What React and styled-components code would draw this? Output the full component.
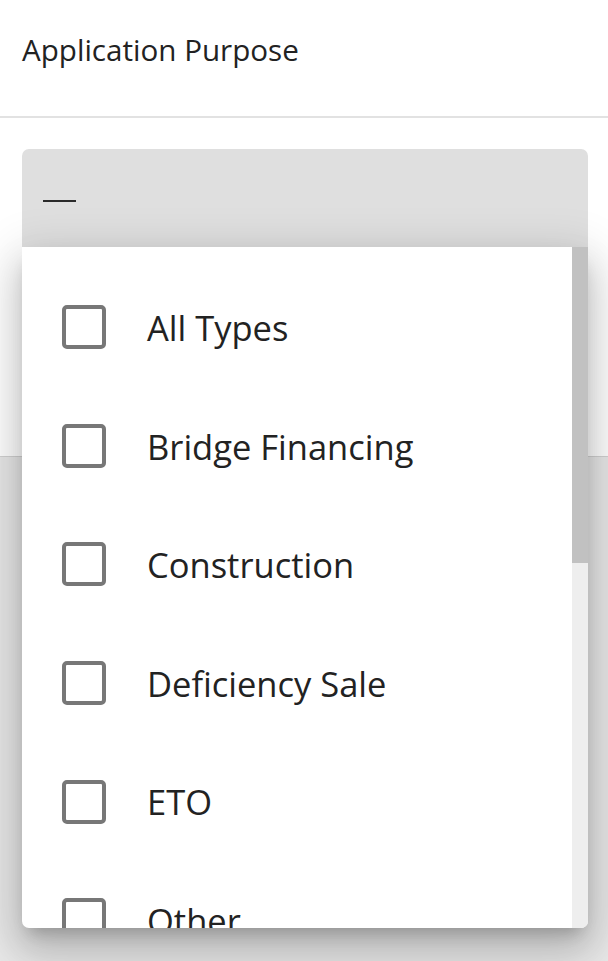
import React from "react";
import styled, { createGlobalStyle } from "styled-components";

const Global = createGlobalStyle`
  html, body { margin: 0; padding: 0; }
  body {
    font-family: "Open Sans", "Noto Sans", sans-serif;
    color: #212121;
    background: #ffffff;
  }
`;

const Page = styled.div`
  min-height: 100vh;
  display: flex;
  flex-direction: column;
  background: #ffffff;
`;

const Header = styled.header`
  height: 118px;
  display: flex;
  align-items: center;
  padding: 0 22px;
  box-sizing: border-box;
  border-bottom: 2px solid #e2e2e2;
`;

const Title = styled.h1`
  margin: 0;
  font-size: 29.6px;
  font-weight: 400;
  color: #222222;
  padding-bottom: 17px;
`;

const Section = styled.section`
  height: 338px;
  box-sizing: border-box;
  padding: 31px 20px 0 22px;
`;

const SelectWrap = styled.div`
  position: relative;
`;

const SelectBox = styled.div`
  height: 98px;
  background: #dfdfdf;
  border-radius: 7px 7px 0 0;
  display: flex;
  align-items: center;
  padding: 0 21px;
  box-sizing: border-box;
`;

const Dash = styled.span`
  display: block;
  width: 33px;
  height: 2px;
  background: #2a2a2a;
  margin-top: 6px;
`;

const Menu = styled.div`
  position: absolute;
  top: 100%;
  left: 0;
  right: 0;
  height: 681px;
  background: #ffffff;
  border-radius: 0 0 7px 7px;
  overflow: hidden;
  z-index: 10;
  box-shadow: 0 11px 15px -7px rgba(0, 0, 0, 0.2),
    0 24px 38px 3px rgba(0, 0, 0, 0.14), 0 9px 46px 8px rgba(0, 0, 0, 0.12);
`;

const List = styled.ul`
  height: 100%;
  margin: 0;
  padding: 21px 16px 0 0;
  list-style: none;
  box-sizing: border-box;
  overflow: hidden;
`;

const Track = styled.div`
  position: absolute;
  top: 0;
  right: 0;
  bottom: 0;
  width: 16px;
  background: #eeeeee;
`;

const Thumb = styled.div`
  height: 316px;
  background: #c1c1c1;
`;

const Item = styled.li`
  height: 118.6px;
  display: flex;
  align-items: center;
  padding-left: 40px;
  gap: 41px;
`;

const Box = styled.span`
  flex: none;
  width: 44px;
  height: 44px;
  box-sizing: border-box;
  border: 4.5px solid #777777;
  border-radius: 5px;
`;

const Label = styled.span`
  font-size: 34.5px;
  color: #222222;
  line-height: 1;
  padding-top: 2px;
`;

const Lower = styled.div`
  flex: 1;
  background: #e8e8e8;
  border-top: 1px solid #d2d2d2;
`;

const options = [
  "All Types",
  "Bridge Financing",
  "Construction",
  "Deficiency Sale",
  "ETO",
  "Other",
  "Purchase",
  "Refinance",
  "Renovation",
  "Rental",
  "Second Mortgage",
  "Transfer",
];

export default function App() {
  return (
    <Page>
      <Global />
      <Header>
        <Title>Application Purpose</Title>
      </Header>
      <Section>
        <SelectWrap>
          <SelectBox>
            <Dash />
          </SelectBox>
          <Menu>
            <List>
              {options.map((o) => (
                <Item key={o}>
                  <Box />
                  <Label>{o}</Label>
                </Item>
              ))}
            </List>
            <Track>
              <Thumb />
            </Track>
          </Menu>
        </SelectWrap>
      </Section>
      <Lower />
    </Page>
  );
}
